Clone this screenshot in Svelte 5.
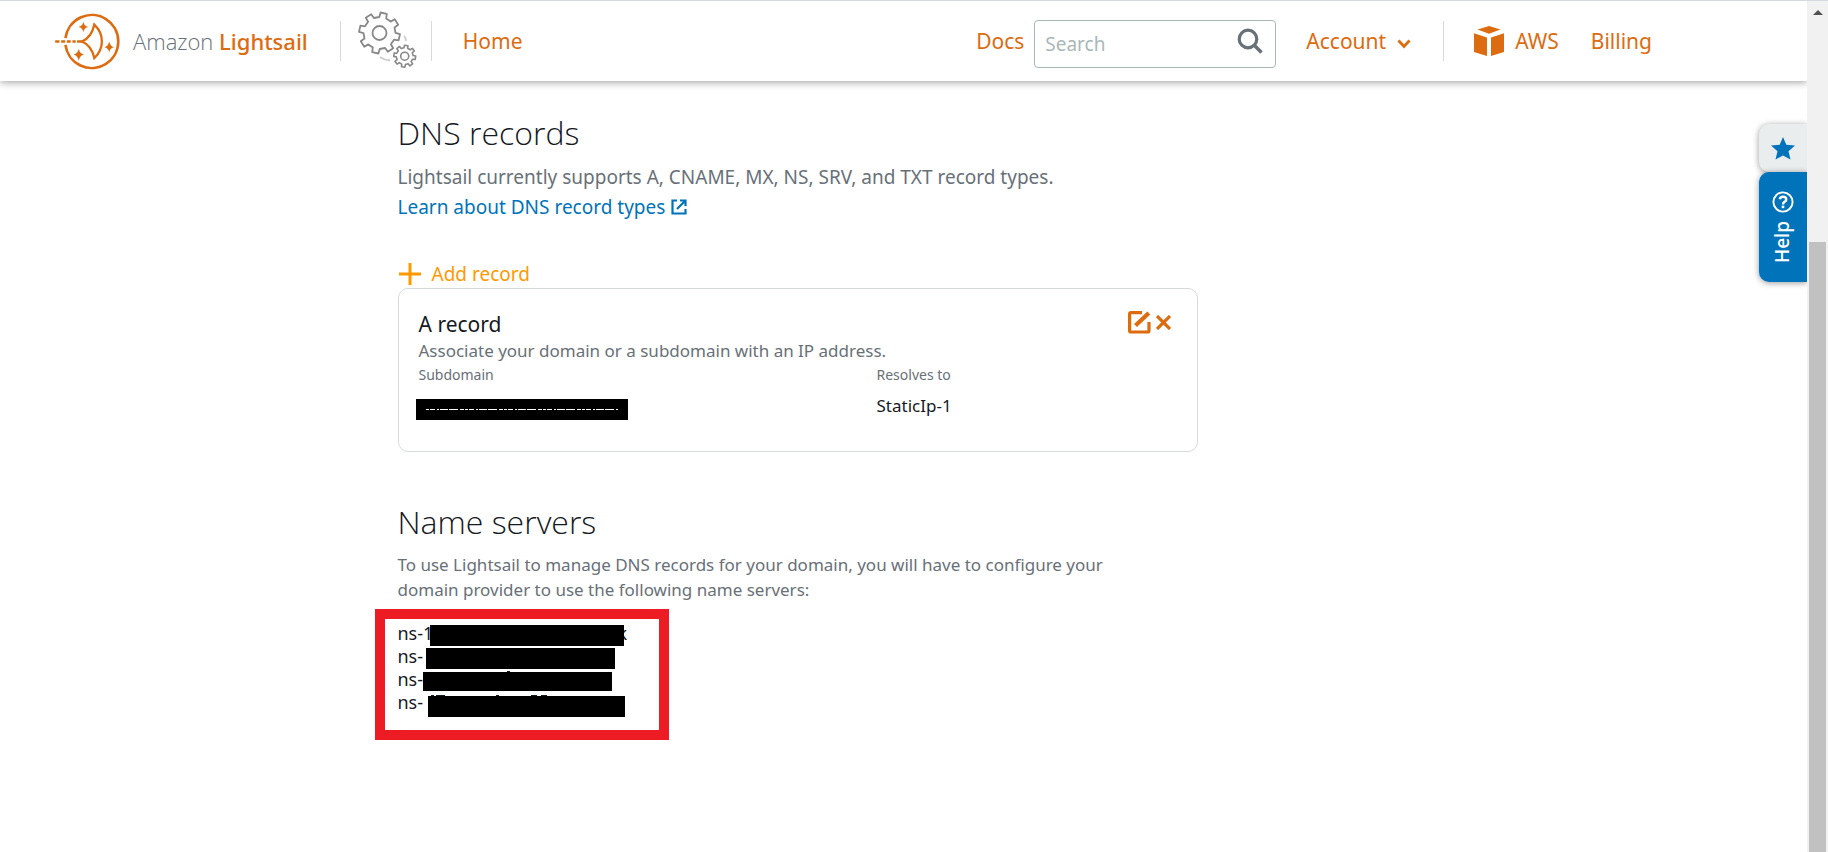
<script>
	let search = "";

	const nameServers = [
		{ text: "ns-1", tail: "k", left: 32, top: 3, width: 194, height: 21 },
		{ text: "ns-", tail: "", left: 28, top: 3, width: 189, height: 21 },
		{ text: "ns-", tail: "", left: 25, top: 4, width: 189, height: 19, marks: "M84 0h3" },
		{ text: "ns-", tail: "", left: 30, top: 5, width: 197, height: 21, marks: "M3 0h3M8 0h9M68 0h3M103 0h6M113 0h6" }
	];

	// outline of a cog wheel, one flat tooth per step
	function gear(cx, cy, outer, root, teeth, turn) {
		const step = 360 / teeth;
		const points = [];

		for (let i = 0; i < teeth; i++) {
			const a = turn + i * step;
			for (const [offset, r] of [
				[-0.28, root],
				[-0.2, outer],
				[0.2, outer],
				[0.28, root]
			]) {
				const rad = ((a + offset * step) * Math.PI) / 180;
				points.push(
					`${(cx + r * Math.sin(rad)).toFixed(1)} ${(cy - r * Math.cos(rad)).toFixed(1)}`
				);
			}
		}

		return `M${points.join("L")}Z`;
	}
</script>

<div class="window">
	<div class="page">
		<header>
			<a class="brand" href="#home">
				<svg class="logo" viewBox="45 25 195 172" aria-hidden="true">
					<g fill="none" stroke="#dd6b10" stroke-width="8">
						<path d="M76 101A80 80 0 1 1 76 121" />
						<path d="M45 111h13M63 111h12M80 111h12M97 111h10M111 111h16" stroke-width="7" />
						<path d="M163 60C193 88 194 132 163 161C158 137 147 120 126 111C147 102 158 85 163 60Z" stroke-width="7" />
					</g>
					<g fill="#dd6b10">
						<path d="M130 51q2 14 15 16q-13 2-15 16q-2-14-15-16q13-2 15-16z" />
						<path d="M208 110q2 15 15 18q-13 2-15 16q-2-14-15-16q13-3 15-18z" />
						<path d="M116 133q3 15 16 17q-13 3-16 19q-3-16-16-19q13-2 16-17z" />
					</g>
				</svg>
				<span class="brand-name"><span class="light">Amazon</span> Lightsail</span>
			</a>

			<span class="divider"></span>

			<svg class="gears" viewBox="358 12 62 60" aria-hidden="true">
				<g fill="none" stroke="#888" stroke-linejoin="round">
					<path d={gear(380.5, 34, 20.5, 16, 8, 12)} stroke-width="1.8" />
					<circle cx="380.5" cy="34" r="7" stroke-width="1.8" />
					<path d={gear(405.7, 57.2, 11, 8.4, 8, 8)} stroke-width="1.6" />
					<circle cx="405.7" cy="57.2" r="4" stroke-width="1.6" />
					<path d="M405 37q2 2 2 5M381 58q4 3 10 3.5" stroke="#ccc" stroke-width="1.8" />
				</g>
			</svg>

			<span class="divider"></span>

			<nav class="left">
				<a href="#home">Home</a>
			</nav>

			<nav class="right">
				<a href="#docs">Docs</a>
				<form class="search">
					<input aria-label="Search" placeholder="Search" bind:value={search} />
					<button type="button" aria-label="Run search">
						<svg width="26" height="26" viewBox="0 0 26 26">
							<g fill="none" stroke="#687078" stroke-width="3.2">
								<circle cx="11" cy="11" r="8.8" />
								<path d="M17 17l7.5 7.5" stroke-width="3.6" />
							</g>
						</svg>
					</button>
				</form>
				<button class="account">
					Account
					<svg width="14" height="10" viewBox="0 0 14 10">
						<path d="M1.5 1.5L7 7.5L12.5 1.5" fill="none" stroke="#dd6b10" stroke-width="2.8" />
					</svg>
				</button>
				<span class="divider"></span>
				<a class="aws" href="#aws">
					<svg width="30" height="30" viewBox="0 0 30 30">
						<path
							d="M15 0L26.5 3.6L15 7.8L3.5 3.6ZM0 7.3L13 11.5V30L0 26ZM30 7.3L17 11.5V30L30 26Z"
							fill="#dd6b10"
						/>
					</svg>
					AWS
				</a>
				<a href="#billing">Billing</a>
			</nav>
		</header>

		<main>
			<section>
				<h1>DNS records</h1>
				<p class="intro">
					Lightsail currently supports A, CNAME, MX, NS, SRV, and TXT record types.<br />
					<a href="#types">
						Learn about DNS record types
						<svg width="16" height="16" viewBox="0 0 16 16">
							<g fill="none" stroke="#0073bb" stroke-width="2.2">
								<path d="M6 1.5H1.5V14.5H14.5V10" />
								<path d="M9 1.5H14.5V7M14 2L6 10" />
							</g>
						</svg>
					</a>
				</p>

				<button class="add">
					<svg width="22" height="22" viewBox="0 0 22 22">
						<path d="M11 0v22M0 11h22" stroke="#ff9900" stroke-width="3" />
					</svg>
					Add record
				</button>

				<div class="card">
					<div class="card-head">
						<h2>A record</h2>
						<div class="actions">
							<button aria-label="Edit record">
								<svg width="23" height="23" viewBox="0 0 23 23">
									<g fill="none" stroke="#dd6b10">
										<path d="M14 1.6H3.2Q1.6 1.6 1.6 3.2V19.4Q1.6 21 3.2 21H19.4Q21 21 21 19.4V11" stroke-width="3.2" />
										<path d="M7.5 14.5L20.8 2" stroke-width="4.2" />
									</g>
								</svg>
							</button>
							<button aria-label="Delete record">
								<svg width="15" height="15" viewBox="0 0 15 15">
									<path d="M1 1L14 14M14 1L1 14" stroke="#dd6b10" stroke-width="3.2" />
								</svg>
							</button>
						</div>
					</div>
					<p class="hint">Associate your domain or a subdomain with an IP address.</p>
					<dl>
						<div>
							<dt>Subdomain</dt>
							<dd>
								<svg class="masked" width="212" height="21" viewBox="0 0 212 21" aria-hidden="true">
									<rect width="212" height="21" />
									<path d="M10 10.5H202" stroke="#fff" stroke-dasharray="3 1 5 2 2 1 8 1 9 2 4 1" />
								</svg>
							</dd>
						</div>
						<div>
							<dt>Resolves to</dt>
							<dd>StaticIp-1</dd>
						</div>
					</dl>
				</div>
			</section>

			<section class="servers">
				<h1>Name servers</h1>
				<p class="note">
					To use Lightsail to manage DNS records for your domain, you will have to configure your
					domain provider to use the following name servers:
				</p>
				<ul>
					{#each nameServers as server}
						<li>
							<span class="host">{server.text}</span>
							{#if server.tail}
								<span class="tail">{server.tail}</span>
							{/if}
							<span
								class="bar"
								style="left: {server.left}px; top: {server.top}px; width: {server.width}px; height: {server.height}px"
							>
								{#if server.marks}
									<svg width="100%" height="2"><path d={server.marks} stroke="#16191f" stroke-width="2" /></svg>
								{/if}
							</span>
						</li>
					{/each}
				</ul>
			</section>
		</main>

		<aside>
			<button class="star" aria-label="Favorites">
				<svg width="24" height="23" viewBox="0 0 24 23">
					<path d="M12 0L15.3 7.8L24 8.6L17.5 14.2L19.5 22.5L12 18.5L4.5 22.5L6.5 14.2L0 8.6L8.7 7.8Z" fill="#0073bb" />
				</svg>
			</button>
			<button class="help">
				<svg width="22" height="22" viewBox="0 0 22 22">
					<g fill="none" stroke="#fff">
						<circle cx="11" cy="11" r="9.6" stroke-width="1.9" />
						<path d="M7.8 8.3Q8.2 5.8 11 5.8Q14.2 5.8 14.2 8.4Q14.2 9.8 12.6 10.8Q11 11.8 11 13.4" stroke-width="2.5" />
						<path d="M11 14.6V17.2" stroke-width="2.6" />
					</g>
				</svg>
				<span>Help</span>
			</button>
		</aside>
	</div>

	<div class="scrollbar" aria-hidden="true">
		<svg width="10" height="5" viewBox="0 0 10 5"><path d="M5 0L10 5H0Z" fill="#505050" /></svg>
		<div class="thumb"></div>
	</div>
</div>

<style>
	:global(body) {
		margin: 0;
		background: #fff;
	}

	.window {
		display: flex;
		height: 100vh;
		box-sizing: border-box;
		border-top: 1px solid #d8d9df;
		overflow: hidden;
		font-family: "Noto Sans", "Open Sans", sans-serif;
		color: #16191f;
	}

	.page {
		flex: 1;
		position: relative;
		min-width: 0;
		overflow: hidden;
	}

	a {
		color: #dd6b10;
		text-decoration: none;
	}

	button {
		display: flex;
		align-items: center;
		padding: 0;
		border: none;
		background: none;
		font: inherit;
		color: inherit;
		cursor: pointer;
	}

	svg {
		flex: none;
	}

	header {
		display: flex;
		align-items: center;
		height: 80px;
		box-sizing: border-box;
		padding: 0 155px 0 55px;
		background: #fff;
		box-shadow: 0 1px 8px rgba(0, 0, 0, 0.4);
		font-size: 21px;
	}

	.brand {
		display: flex;
		align-items: center;
		gap: 13px;
		margin-right: 32px;
	}

	.logo {
		width: 65px;
		height: 57px;
	}

	.brand-name {
		font-size: 22px;
		font-weight: 500;
	}

	.light {
		font-family: "Open Sans", "Noto Sans", sans-serif;
		font-weight: 300;
		color: #687078;
	}

	.divider {
		width: 1px;
		height: 40px;
		background: #d5dbdb;
	}

	.gears {
		width: 62px;
		height: 60px;
		margin: 0 12px 0 16px;
	}

	.left {
		margin-left: 31px;
	}

	.right {
		display: flex;
		align-items: center;
		margin-left: auto;
	}

	.search {
		display: flex;
		align-items: center;
		width: 242px;
		height: 48px;
		box-sizing: border-box;
		margin: 5px 30px 0 10px;
		padding: 0 12px 0 10px;
		border: 1px solid #aab7b8;
		border-radius: 4px;
	}

	.search input {
		flex: 1;
		min-width: 0;
		padding: 0;
		border: none;
		outline: none;
		background: none;
		font: inherit;
		font-size: 19px;
	}

	.search input::placeholder {
		color: #aab7b8;
		opacity: 1;
	}

	.search button {
		margin-bottom: 6px;
	}

	.account {
		gap: 11px;
		margin-right: 32px;
		color: #dd6b10;
	}

	.account svg {
		margin-top: 5px;
	}

	.aws {
		display: flex;
		align-items: center;
		gap: 11px;
		margin: 0 32px 0 30px;
	}

	main {
		max-width: 1012px;
		margin: 0 auto;
		padding-top: 28px;
	}

	h1 {
		margin: 0;
		font-family: "Open Sans", "Noto Sans", sans-serif;
		font-size: 32px;
		font-weight: 300;
		line-height: 48px;
	}

	.intro {
		margin: 5px 0 0;
		font-size: 19px;
		line-height: 30px;
		color: #687078;
	}

	.intro a {
		display: inline-flex;
		align-items: center;
		gap: 6px;
		color: #0073bb;
	}

	.add {
		gap: 11px;
		margin: 38px 0 0 1px;
		font-size: 19px;
		line-height: 28px;
		color: #ff9900;
	}

	.card {
		max-width: 800px;
		height: 164px;
		box-sizing: border-box;
		padding: 20px 26px 0 20px;
		border: 1px solid #d5dbdb;
		border-radius: 10px;
	}

	.card-head {
		display: flex;
		justify-content: space-between;
	}

	h2 {
		margin: 0;
		font-size: 21px;
		font-weight: 400;
		line-height: 30px;
	}

	.actions {
		display: flex;
		align-items: center;
		gap: 5px;
		height: 26px;
	}

	.hint {
		margin: 0;
		font-size: 17px;
		line-height: 24px;
		color: #687078;
	}

	dl {
		display: grid;
		grid-template-columns: 458px 1fr;
		margin: 0;
	}

	dt {
		font-size: 14px;
		line-height: 24px;
		color: #687078;
	}

	dd {
		margin: 7px 0 0;
		font-size: 17px;
		line-height: 24px;
	}

	.masked {
		display: block;
		margin: 12px 0 0 -3px;
	}

	.servers {
		margin-top: 46px;
	}

	.note {
		max-width: 720px;
		margin: 6px 0 0;
		font-size: 17px;
		line-height: 25px;
		color: #687078;
	}

	ul {
		width: 294px;
		height: 131px;
		box-sizing: border-box;
		margin: 7px 0 0 -23px;
		padding: 3px 13px;
		border: 10px solid #ed1c24;
		list-style: none;
		font-size: 18px;
		line-height: 23px;
	}

	li {
		display: flex;
		position: relative;
		height: 23px;
	}

	.host {
		width: 220px;
	}

	.bar {
		position: absolute;
		background: #000;
	}

	.bar svg {
		position: absolute;
		left: 0;
		top: -1px;
	}

	aside {
		position: absolute;
		top: 123px;
		right: 0;
		width: 48px;
	}

	aside button {
		width: 100%;
		justify-content: center;
		border-radius: 10px 0 0 10px;
		box-shadow: 0 1px 6px rgba(0, 0, 0, 0.4);
	}

	.star {
		height: 48px;
		background: #eaeded;
	}

	.help {
		flex-direction: column;
		gap: 8px;
		height: 110px;
		background: #0073bb;
		color: #fff;
		font-size: 19px;
		font-weight: 500;
	}

	.help span {
		writing-mode: vertical-rl;
		transform: rotate(180deg);
		line-height: 24px;
		margin-right: 3px;
	}

	.scrollbar {
		display: flex;
		flex-direction: column;
		align-items: center;
		width: 21px;
		box-sizing: border-box;
		padding-top: 9px;
		background: #f1f1f1;
	}

	.thumb {
		flex: 1;
		width: 17px;
		margin-top: 227px;
		background: #c1c1c1;
	}
</style>
